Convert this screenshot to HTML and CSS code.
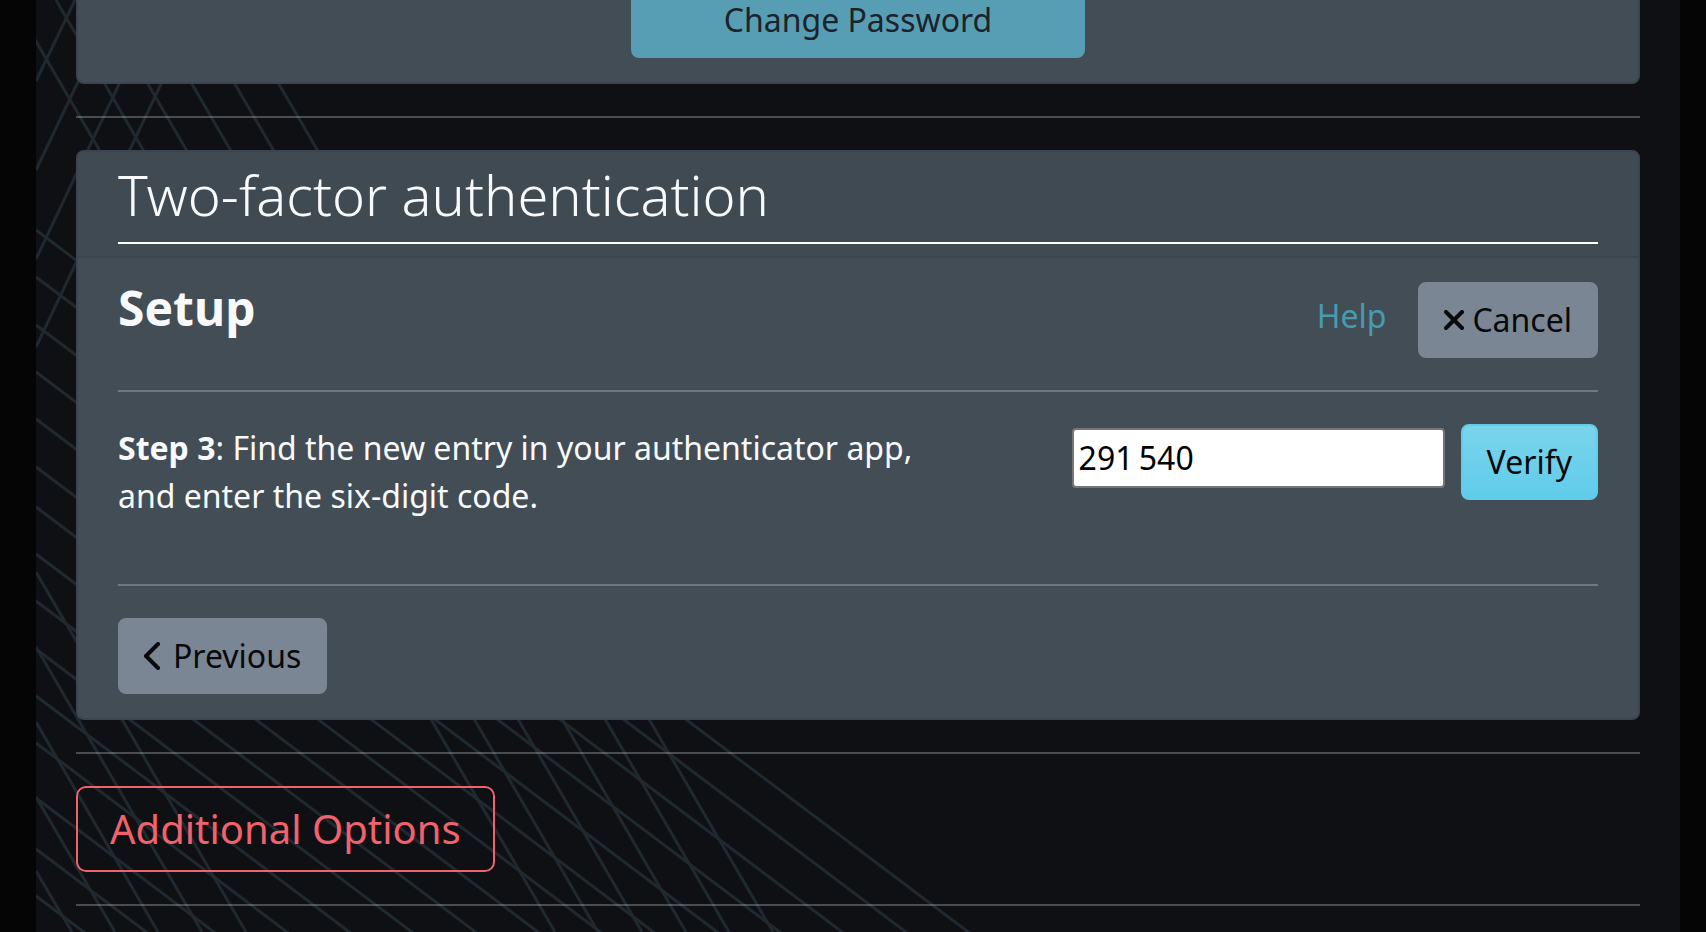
FILE: index.html
```html
<!DOCTYPE html>
<html lang="en">
<head>
<meta charset="utf-8">
<meta name="viewport" content="width=device-width, initial-scale=1">
<title>Account settings</title>
<link rel="stylesheet" href="styles.css">
</head>
<body>
<main class="page">
  <svg class="page-lines" aria-hidden="true" fill="none" stroke="#202930" stroke-width="3">
    <path d="M12 0L555 932M56 0L598 932M99 0L642 932M143 0L686 932M186 0L729 932M230 0L773 932" transform="translate(-36 0)"/>
    <path d="M36 572L246 932M36 647L202 932M36 722L158 932M36 797L115 932M36 871L72 932" transform="translate(-36 0)"/>
    <path d="M36 81L75 0M36 170L117 0M36 259L159 0M36 347L201 0" transform="translate(-36 0)"/>
    <path d="M0 230l1000 753M0 277l1000 753M0 325l1000 753M0 372l1000 753M0 419l1000 753M0 467l1000 753M0 507l1000 753M0 554l1000 753M0 601l1000 753M0 649l1000 753M0 696l1000 753M0 743l1000 753M0 798l1000 753M0 849l1000 753M0 896l1000 753"/>
  </svg>
  <div class="content">
    <section class="card card-password">
      <div class="card-body">
        <button class="btn btn-wide" type="submit" disabled>Change Password</button>
      </div>
    </section>
    <hr class="rule">
    <section class="card">
      <header class="card-header">
        <h2 class="card-title">Two-factor authentication</h2>
      </header>
      <div class="card-body">
        <div class="setup">
          <h3 class="setup-title">Setup</h3>
          <div class="setup-actions">
            <a class="help" href="#help">Help</a>
            <button class="btn btn-muted" type="button">
              <svg class="icon-x" viewBox="0 0 20 20" aria-hidden="true"><path d="M2 2L18 18M18 2L2 18"/></svg>
              <span>Cancel</span>
            </button>
          </div>
        </div>
        <hr class="rule">
        <form class="step">
          <label class="step-text" for="code"><strong>Step 3</strong>: Find the new entry in your authenticator app, and enter the six-digit code.</label>
          <div class="step-entry">
            <input class="code" id="code" type="text" inputmode="numeric" value="291&#8201;540">
            <button class="btn btn-primary" type="button">Verify</button>
          </div>
        </form>
        <hr class="rule">
        <button class="btn btn-muted btn-previous" type="button">
          <svg class="icon-chevron" viewBox="0 0 16 28" aria-hidden="true"><path d="M14 2L2 14L14 26"/></svg>
          <span>Previous</span>
        </button>
      </div>
    </section>
    <hr class="rule">
    <button class="btn-outline" type="button">Additional Options</button>
    <hr class="rule">
  </div>
</main>
</body>
</html>
```
FILE: styles.css
```css
* {
  box-sizing: border-box;
}

body {
  margin: 0;
  background: #050505;
  color: #f8f9fa;
  font: 32px/48px "Noto Sans", sans-serif;
}

.page {
  position: relative;
  min-height: 100vh;
  margin: 0 26px 0 36px;
  padding: 0 40px;
  overflow: hidden;
  background: #0f1014;
}

.page-lines {
  position: absolute;
  inset: 0;
  width: 100%;
  height: 100%;
}

.content {
  position: relative;
}

.card {
  border: 2px solid #3b454f;
  border-radius: 8px;
  background: #434d56;
}

.card-password {
  margin-top: -44px;
  text-align: center;
}

.card-header {
  padding: 12px 40px;
  border-bottom: 2px solid #3b454f;
  border-radius: 6px 6px 0 0;
  background: #404a53;
}

.card-title {
  margin: 0;
  padding-bottom: 18px;
  border-bottom: 2px solid #fff;
  font-size: 56px;
  font-weight: 300;
  line-height: 60px;
}

.card-body {
  padding: 24px 40px;
}

.rule {
  height: 2px;
  margin: 32px 0;
  border: 0;
  background: rgba(255, 255, 255, 0.25);
}

.card .rule {
  background: #6e797f;
}

.btn {
  display: inline-flex;
  align-items: center;
  justify-content: center;
  padding: 12px 24px;
  border: 2px solid transparent;
  border-radius: 8px;
  font: inherit;
  color: #08090b;
}

.btn-wide {
  display: flex;
  width: 454px;
  max-width: 100%;
  margin: 0 auto;
  border-color: #579eb5;
  background: #579eb5;
  color: #1d232a;
}

.btn-muted {
  border-color: #7b8694;
  background: #7b8694;
}

.btn-primary {
  border-color: #60cce9;
  background: linear-gradient(#7ad4ec, #60cce9);
}

.setup,
.setup-actions,
.step-entry {
  display: flex;
}

.setup {
  justify-content: space-between;
}

.setup-title {
  margin: 0;
  font-size: 48px;
  line-height: 52px;
}

.setup-actions {
  gap: 32px;
}

.help {
  padding-top: 10px;
  color: #479bb1;
  text-decoration: none;
}

.icon-x,
.icon-chevron {
  fill: none;
  stroke: currentColor;
  stroke-width: 4;
  stroke-linecap: round;
  stroke-linejoin: round;
}

.icon-x {
  width: 20px;
  height: 20px;
  margin-right: 8px;
}

.icon-chevron {
  width: 16px;
  height: 28px;
  margin-right: 13px;
}

.step {
  display: flex;
  justify-content: space-between;
  margin-bottom: 64px;
}

.step-text {
  flex: 0 0 56%;
}

.step-entry {
  align-items: flex-start;
  gap: 16px;
}

.code {
  width: 373px;
  height: 60px;
  margin-top: 4px;
  padding: 0 5px 2px;
  border: 2px solid #767676;
  border-radius: 4px;
  background: #fff;
  color: #000;
  font: inherit;
}

.btn-outline {
  display: block;
  padding: 12px 32px;
  border: 2px solid #f0626c;
  border-radius: 10px;
  background: transparent;
  color: #f0626c;
  font: inherit;
  font-size: 40px;
  line-height: 58px;
}
```
